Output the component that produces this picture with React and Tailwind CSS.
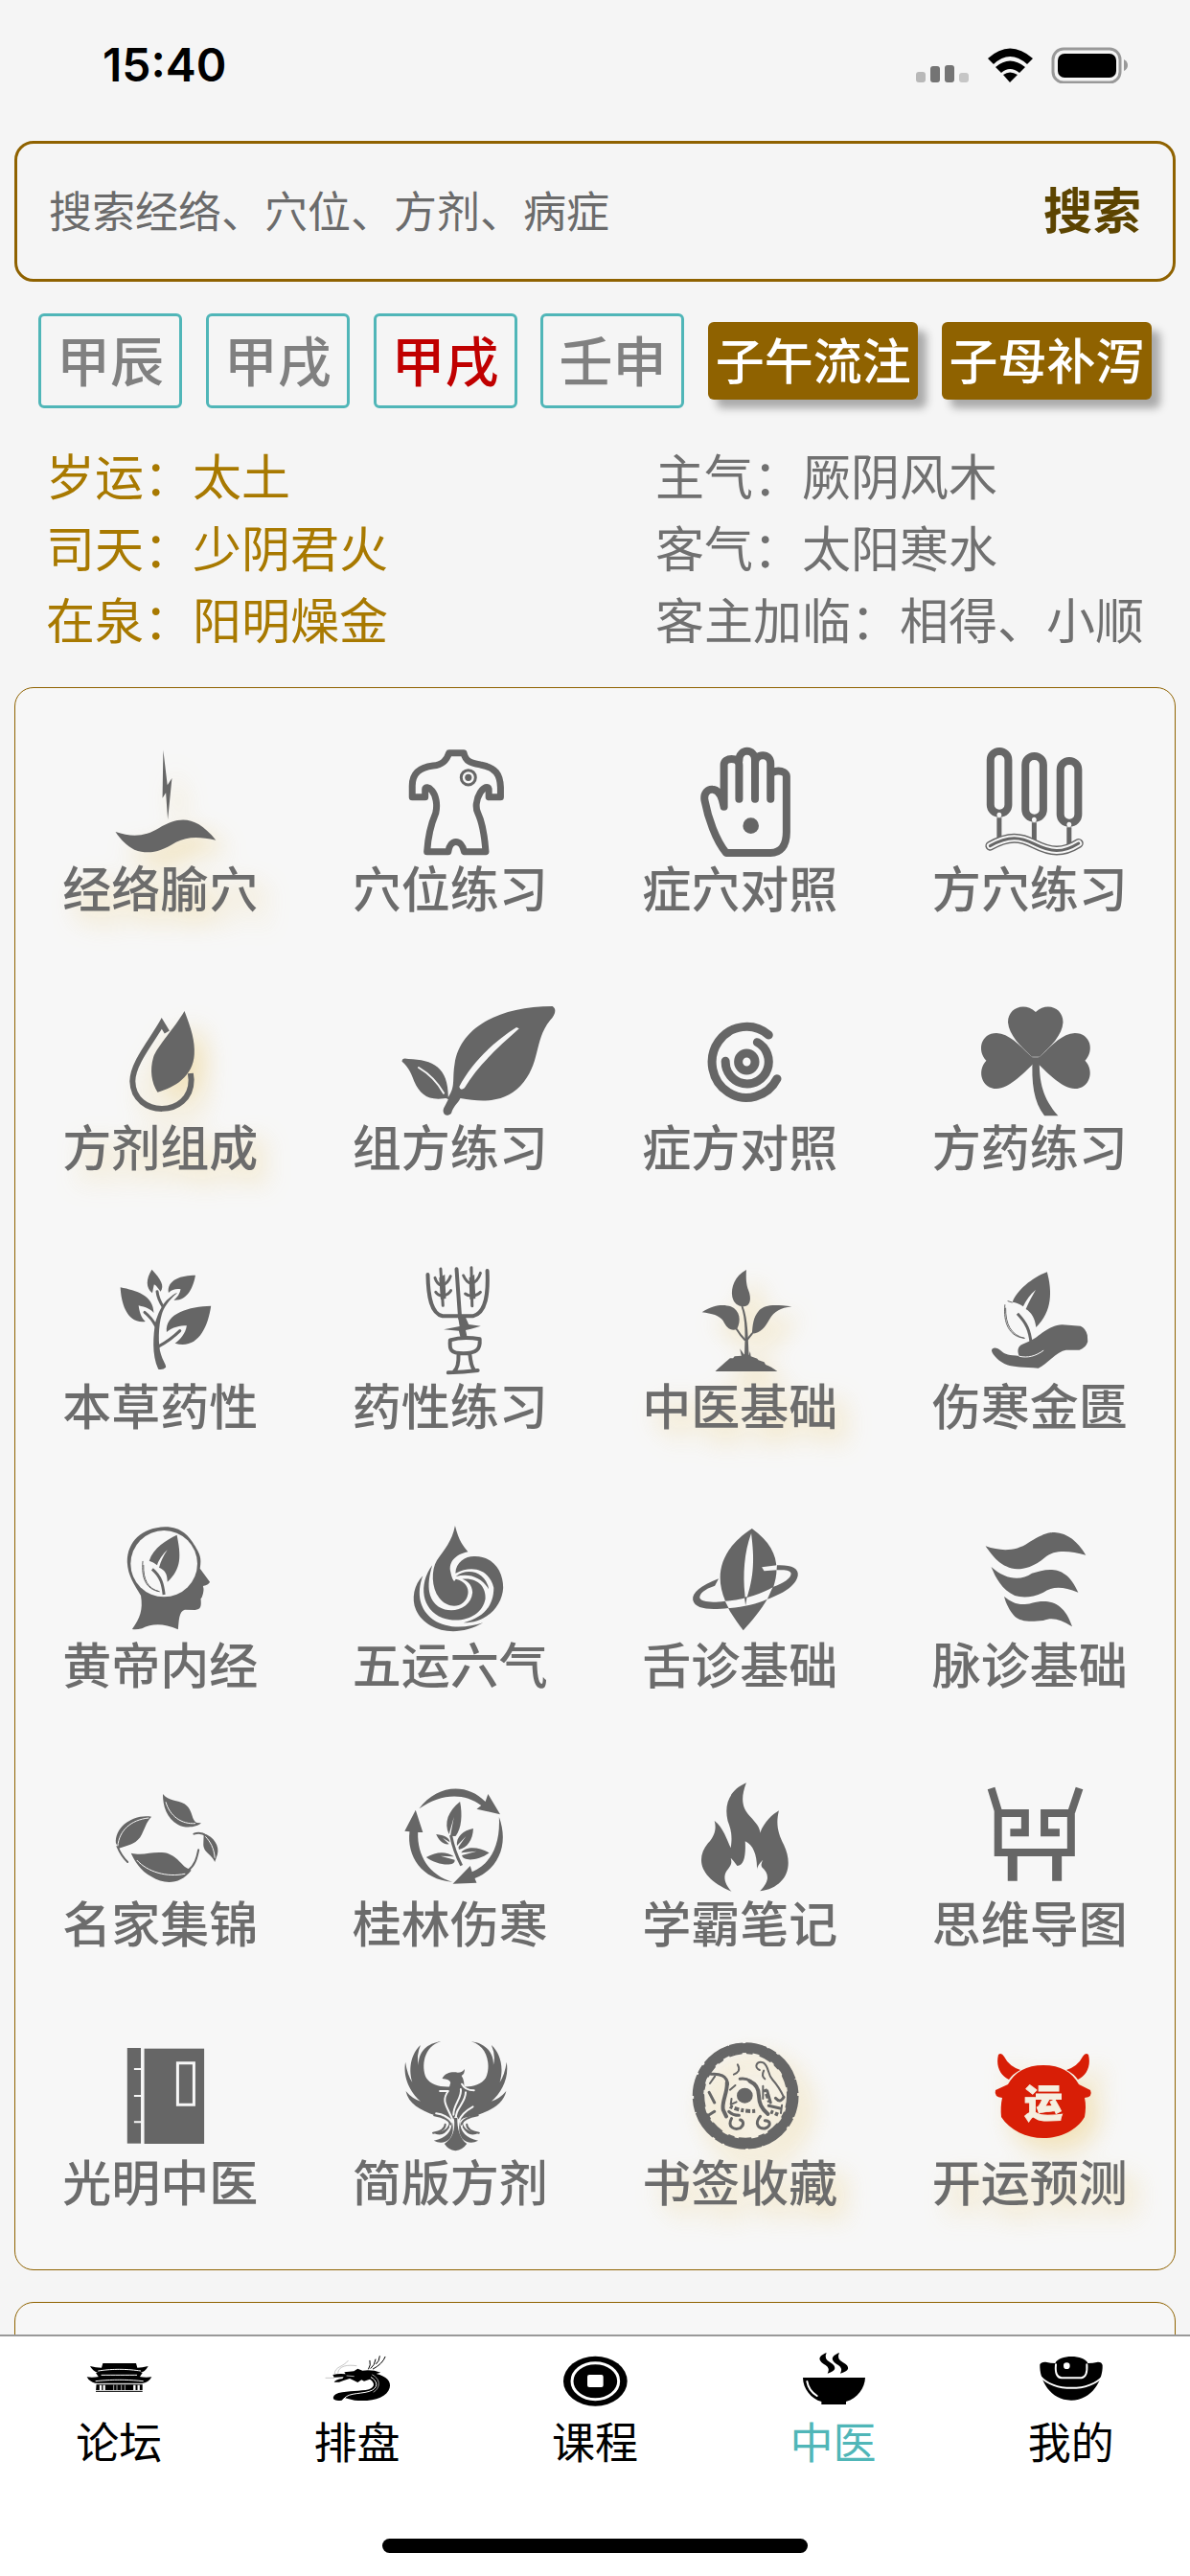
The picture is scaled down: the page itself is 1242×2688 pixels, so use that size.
import React, { useState } from 'react';
import clsx from 'clsx';

const INK = '#666666';
const PAPER = '#f7f7f7';

const line = (width, color = INK) => ({
  fill: 'none',
  stroke: color,
  strokeWidth: width,
  strokeLinecap: 'round',
  strokeLinejoin: 'round',
});

// Each drawing keeps its own viewBox; strokes stay in screen pixels.
function Drawing({ box, children }) {
  return (
    <svg
      viewBox={box}
      preserveAspectRatio="none"
      fill={INK}
      aria-hidden="true"
      className="h-[120px] w-[180px] overflow-visible [&_*]:[vector-effect:non-scaling-stroke]"
    >
      {children}
    </svg>
  );
}

const NeedleIcon = () => (
  <Drawing box="195 105 455 360">
    <path d="M431 128 L442 238 L454 216 L443 346 L438 262 L429 278Z" />
    <path d="M305 384 C350 402 385 398 420 372 C472 336 515 330 570 410 C525 398 495 398 465 416 C420 450 390 455 355 440 C335 428 320 410 305 384Z" />
  </Drawing>
);

const BodyIcon = () => (
  <Drawing box="958 105 455 360">
    <path
      {...line(7)}
      d="M1182 137 H1221 C1226 165 1240 168 1265 174 C1305 182 1317 205 1318 245 V275 H1287 V250 C1285 240 1275 243 1265 260 C1252 285 1252 310 1258 325 C1268 350 1275 385 1279 446 H1222 C1215 405 1185 405 1180 446 H1124 C1127 390 1138 350 1147 325 C1152 300 1148 270 1137 255 C1128 243 1119 243 1119 250 V275 H1085 V240 C1085 200 1105 182 1140 177 C1165 174 1176 160 1182 137Z"
    />
    <ellipse {...line(3)} cx="1233" cy="214" rx="19" ry="23" />
    <ellipse cx="1233" cy="214" rx="9" ry="11" />
  </Drawing>
);

const HandIcon = () => (
  <Drawing box="156 105 455 360">
    <path
      {...line(8)}
      d="M342 305 C338 280 330 252 312 251 C300 250 288 262 291 285 C300 340 320 410 348 450 H465 C490 450 507 430 507 385 V210 C506 188 465 188 465 210 M342 305 V175 C342 150 382 150 382 175 V281 M382 160 C382 122 424 122 424 160 V281 M424 170 C424 136 465 136 465 170 V281"
    />
    <ellipse cx="413" cy="365" rx="21" ry="25" />
  </Drawing>
);

const NeedlesIcon = () => (
  <Drawing box="918 105 454 360">
    <rect {...line(8)} x="1041" y="132" width="47" height="194" rx="23" ry="27" />
    <rect {...line(8)} x="1133" y="147" width="47" height="194" rx="23" ry="27" />
    <rect {...line(8)} x="1225" y="162" width="47" height="194" rx="23" ry="27" />
    <g fill={PAPER}>
      <ellipse cx="1064" cy="331" rx="6" ry="8" />
      <ellipse cx="1156" cy="346" rx="6" ry="8" />
      <ellipse cx="1248" cy="361" rx="6" ry="8" />
    </g>
    <path {...line(5)} strokeLinecap="butt" d="M1064 340 V402 M1156 355 V420 M1248 370 V435" />
    <path {...line(10)} d="M1040 428 C1090 395 1120 400 1156 422 C1200 448 1230 452 1273 420" />
    <path {...line(7, PAPER)} d="M1040 428 C1090 395 1120 400 1156 422 C1200 448 1230 452 1273 420" />
    <path {...line(3)} d="M1040 428 C1090 395 1120 400 1156 422 C1200 448 1230 452 1273 420" />
  </Drawing>
);

const DropLeafIcon = () => (
  <Drawing box="195 915 455 360">
    <path {...line(6)} strokeLinecap="butt" strokeLinejoin="miter" d="M441 1011 L427 984 C400 1040 350 1110 350 1165 C352 1280 505 1280 505 1160 L503 1140" />
    <path d="M487 945 C505 1000 515 1040 513 1080 C510 1150 460 1185 416 1199 C400 1170 395 1130 405 1090 C415 1055 460 1000 487 945Z" />
  </Drawing>
);

const LeavesIcon = () => (
  <Drawing box="958 915 455 360">
    <path d="M1455 930 C1466 938 1464 955 1448 975 C1405 1040 1425 1110 1370 1180 C1330 1230 1275 1232 1212 1218 C1205 1235 1195 1240 1188 1265 C1175 1280 1160 1265 1170 1245 L1180 1222 Q1175 1216 1168 1219 C1125 1225 1105 1205 1090 1165 C1080 1130 1070 1115 1058 1103 C1058 1092 1065 1092 1075 1095 C1140 1098 1180 1120 1180 1215 C1200 1180 1190 1160 1197 1110 C1210 1000 1310 930 1455 930Z" />
    <path fill={PAPER} d="M1367 1000 C1310 1060 1255 1120 1223 1186 Q1212 1196 1209 1182 C1240 1110 1300 1040 1360 996Z" />
    <path {...line(2, PAPER)} d="M1102 1122 C1135 1145 1155 1175 1168 1202" />
  </Drawing>
);

const TargetIcon = () => (
  <Drawing box="156 915 455 360">
    <path {...line(9)} d="M460 1020 A91 111 0 1 0 482 1157" />
    <path {...line(9)} d="M430 1043 A57 69 0 1 1 346 1102" />
    <ellipse {...line(9)} cx="402" cy="1104" rx="22" ry="27" />
  </Drawing>
);

const CloverIcon = () => (
  <Drawing box="918 915 454 360">
    <path d="M1160 948 C1130 915 1087 935 1087 980 C1090 1020 1120 1055 1150 1088 H1170 C1200 1055 1230 1020 1232 980 C1232 935 1190 915 1160 948Z" />
    <path d="M1030 1100 C1005 1070 1015 1014 1057 1014 C1090 1016 1115 1050 1145 1083 L1162 1100 C1120 1150 1090 1185 1057 1188 C1020 1188 1003 1135 1030 1100Z" />
    <path d="M1290 1100 C1315 1070 1305 1014 1263 1014 C1230 1016 1205 1050 1175 1083 L1158 1100 C1200 1150 1230 1185 1263 1188 C1300 1188 1317 1135 1290 1100Z" />
    <path d="M1152 1090 C1148 1170 1155 1230 1183 1273 H1219 C1180 1220 1168 1170 1170 1090Z" />
  </Drawing>
);

const HerbIcon = () => (
  <Drawing box="195 105 455 360">
    <path d="M418 446 C400 400 405 340 410 300 C418 270 425 250 440 230 C455 215 465 205 468 208 C445 230 432 255 427 275 C418 310 417 370 425 400 C430 420 438 430 438 440 Q430 450 418 446Z" />
    <path {...line(3)} d="M420 374 Q450 355 475 326 M411 310 Q400 285 382 268 M430 250 Q417 225 415 203" />
    <path d="M318 190 C360 200 405 215 406 270 C398 258 385 252 366 247 C368 265 372 285 384 297 C335 305 320 240 318 190Z" />
    <path d="M401 134 C425 165 435 185 424 203 C418 195 414 185 407 181 C405 190 404 200 402 208 C385 190 385 165 401 134Z" />
    <path d="M516 152 C480 152 440 165 445 207 C455 196 465 194 477 196 C475 210 468 222 459 230 C495 232 510 190 516 152Z" />
    <path d="M557 248 C500 250 435 270 440 330 C455 315 475 310 493 310 C490 335 475 355 462 365 C520 385 548 320 557 248Z" />
  </Drawing>
);

const OracleIcon = () => (
  <Drawing box="958 105 455 360">
    <path {...line(4)} d="M1126 150 C1127 220 1135 273 1165 280 H1245 C1280 270 1286 210 1283 138 M1202 133 L1211 285 M1218 290 L1220 345" />
    <path {...line(3)} d="M1160 132 L1166 247 M1145 160 Q1150 180 1163 184 Q1180 178 1186 155 M1147 205 Q1152 215 1166 217 Q1182 212 1187 200 M1241 128 L1243 248 M1220 153 Q1228 175 1241 178 Q1258 172 1265 145 M1225 210 Q1232 217 1243 217 Q1258 215 1265 205" />
    <path d="M1156 160 L1171 150 L1174 225 L1160 228Z M1235 160 L1249 150 L1252 225 L1237 228Z" />
    <path d="M1206 284 L1226 284 L1234 306 L1266 311 L1240 320 L1226 324 L1230 346 H1212 L1208 326 L1168 322 L1210 312Z" />
    <path {...line(4)} d="M1185 355 Q1220 342 1263 352 C1265 385 1255 396 1220 397 C1185 397 1183 385 1185 355Z M1207 400 Q1208 440 1196 452 M1237 400 Q1240 435 1248 448 M1180 457 Q1220 455 1258 450" />
  </Drawing>
);

const SproutIcon = () => (
  <Drawing box="156 105 455 360">
    <path d="M401 135 C370 155 360 190 364 220 C368 240 378 250 395 250 C412 248 415 225 407 200 C400 180 400 160 401 135Z" />
    <path d="M284 268 C320 240 345 245 360 250 C385 262 388 295 376 322 C358 328 348 315 340 295 C330 278 310 272 284 268Z" />
    <path d="M521 250 C470 243 450 245 435 262 C418 285 418 310 416 335 C440 332 450 315 462 290 C475 265 490 255 521 250Z" />
    <path d="M387 248 C400 290 398 340 396 405 H408 C405 350 406 290 392 248Z" />
    <path {...line(2)} d="M376 322 Q385 340 397 354 M416 335 L404 353" />
    <path d="M319 453 C340 430 350 420 358 412 L366 412 L370 406 L388 404 L384 382 L395 400 L408 402 L411 390 L413 406 L430 413 L433 418 L448 424 L452 432 C462 436 472 444 483 453Z" />
  </Drawing>
);

const HandLeafIcon = () => (
  <Drawing box="918 105 454 360">
    <path d="M1190 142 C1203 200 1205 265 1161 315 C1158 285 1148 268 1134 258 C1142 235 1152 215 1160 198 C1145 212 1135 230 1127 250 C1118 242 1108 237 1099 236 C1110 200 1150 160 1190 142Z" />
    <path {...line(1)} d="M1079 245 C1074 300 1090 345 1130 349 M1081 255 C1080 305 1095 340 1130 349 M1087 233 L1098 237" />
    <path {...line(3)} strokeLinecap="butt" d="M1112 272 C1137 303 1144 325 1148 365" />
    <path d="M1145 358 C1170 345 1190 310 1230 307 L1278 311 Q1292 318 1296 340 L1297 360 Q1292 380 1275 386 H1240 C1215 390 1190 430 1167 443 C1130 440 1100 440 1085 433 C1065 425 1045 400 1044 388 C1045 375 1060 378 1068 388 C1080 402 1090 402 1117 405 C1112 395 1110 375 1125 368Z" />
    <path {...line(1, PAPER)} d="M1117 406 C1140 412 1160 405 1180 388" />
  </Drawing>
);

const HeadIcon = () => (
  <Drawing box="195 915 455 360">
    <path d="M436 940 C480 940 500 970 515 1000 C527 1025 533 1035 528 1070 L554 1112 Q552 1120 536 1125 Q540 1140 533 1160 L530 1165 C532 1190 530 1198 515 1200 L488 1199 C472 1205 473 1230 470 1261 C430 1240 400 1243 375 1258 Q360 1262 349 1260 C370 1225 378 1200 372 1155 C355 1120 338 1095 336 1050 C336 985 375 942 436 940Z" />
    <ellipse cx="433" cy="1055" rx="88" ry="104" fill={PAPER} />
    <path d="M467 965 C478 1030 480 1070 442 1112 C442 1085 435 1075 420 1067 C425 1045 432 1030 442 1012 C430 1025 418 1045 415 1060 Q405 1050 394 1046 C405 1005 440 980 467 965Z" />
    <path {...line(1)} d="M377 1048 C373 1100 385 1135 420 1142 M379 1060 C378 1105 390 1133 420 1142" />
    <path {...line(3)} strokeLinecap="butt" d="M402 1072 C425 1095 430 1120 433 1152" />
  </Drawing>
);

const SwirlIcon = () => (
  <Drawing box="958 915 455 360">
    <path d="M1198 936 C1208 985 1220 1000 1232 1018 C1200 1025 1180 1050 1186 1080 Q1190 1105 1196 1110 L1200 1103 C1225 1110 1235 1130 1232 1150 C1225 1195 1180 1200 1156 1162 C1135 1130 1135 1075 1150 1045 C1170 1010 1190 985 1198 936Z" />
    <path d="M1199 1085 C1200 1050 1225 1032 1248 1032 C1300 1030 1325 1080 1325 1130 C1322 1190 1280 1240 1220 1240 C1270 1225 1300 1190 1300 1130 C1290 1080 1250 1055 1199 1085Z" />
    <path d="M1217 1103 C1260 1098 1280 1130 1278 1165 C1270 1220 1215 1245 1165 1225 C1110 1200 1100 1120 1138 1060 C1120 1130 1130 1170 1155 1190 C1190 1215 1240 1195 1244 1145 C1243 1120 1230 1108 1217 1103Z" />
    <path d="M1113 1093 C1095 1150 1105 1200 1140 1230 C1180 1262 1230 1255 1272 1240 C1200 1290 1120 1265 1095 1200 C1082 1165 1090 1120 1113 1093Z" />
    <path d="M1200 1095 C1230 1065 1280 1080 1287 1135 C1265 1095 1235 1085 1200 1095Z" />
  </Drawing>
);

const OrbitIcon = () => (
  <Drawing box="156 915 455 360">
    <path d="M416 945 C480 1000 492 1060 472 1130 L457 1165 C440 1200 415 1235 393 1264 C375 1235 350 1195 345 1170 C320 1100 325 1015 416 945Z" />
    <path fill={PAPER} d="M414 960 C420 1020 425 1080 403 1160 L399 1185 L397 1150 C392 1090 395 1020 414 960Z" />
    <path fill={PAPER} d="M344 1172 C390 1170 440 1150 472 1128 L456 1166 C430 1180 390 1192 354 1194Z" />
    <path fill={PAPER} d="M442 1066 L482 1060 V1075 L448 1078Z" />
    <path d="M328 1102 C280 1125 258 1145 260 1168 C265 1200 310 1200 354 1194 L345 1172 C310 1178 282 1175 278 1162 C278 1148 290 1135 318 1124Z" />
    <path d="M482 1060 C520 1058 540 1070 537 1092 C532 1125 495 1150 457 1166 L471 1128 C500 1115 520 1100 519 1085 C515 1074 500 1075 481 1075Z" />
    <path d="M396 1160 L403 1158 L399 1186Z" />
  </Drawing>
);

const WavesIcon = () => (
  <Drawing box="918 915 454 360">
    <path d="M1028 1000 C1070 1018 1110 1015 1140 990 C1180 960 1195 957 1210 957 C1245 960 1270 985 1292 1028 C1250 1015 1210 1010 1185 1035 C1155 1065 1130 1072 1112 1072 C1070 1070 1045 1030 1028 1000Z" />
    <path d="M1043 1065 C1080 1105 1120 1110 1150 1085 C1190 1070 1240 1055 1272 1145 C1230 1125 1205 1125 1180 1145 C1150 1162 1125 1162 1105 1155 C1070 1135 1055 1100 1043 1065Z" />
    <path d="M1077 1158 C1100 1180 1120 1188 1150 1178 C1195 1165 1235 1175 1256 1252 C1225 1230 1205 1222 1180 1233 C1140 1238 1120 1235 1105 1220 C1090 1200 1082 1180 1077 1158Z" />
  </Drawing>
);

const LeafRingIcon = () => (
  <Drawing box="195 105 455 360">
    <path d="M430 156 C445 178 470 175 487 187 C510 205 505 240 520 246 L531 247 C520 260 490 265 470 252 C440 232 430 195 430 156Z" />
    <path d="M400 227 C350 218 303 260 306 310 L314 326 C335 318 355 315 370 292 C383 265 385 245 400 227Z" />
    <path d="M346 341 C380 350 400 335 435 340 C470 348 480 385 498 390 L505 395 C475 440 435 440 400 415 C370 395 355 365 346 341Z" />
    <path d="M538 280 C565 290 580 320 574 345 L567 369 C560 345 535 340 537 310Z" />
    <path {...line(2)} d="M310 320 Q320 350 337 369 M496 396 C515 380 520 355 524 331 M512 281 Q530 273 545 287" />
    <path {...line(1, PAPER)} d="M438 182 C448 225 480 252 515 248 M392 231 C345 237 315 270 311 318 M362 364 C390 400 440 418 488 406 M543 290 C555 305 565 325 567 355" />
  </Drawing>
);

const CycleIcon = () => (
  <Drawing box="958 105 455 360">
    <path d="M1103 202 C1150 125 1230 120 1278 180 L1285 156 L1317 220 L1255 203 L1267 192 C1220 150 1160 155 1103 202Z" />
    <path d="M1314 228 C1340 310 1315 390 1250 420 L1255 434 L1192 437 L1238 381 L1243 400 C1290 375 1318 320 1314 228Z" />
    <path d="M1191 431 C1110 425 1070 350 1078 274 L1065 272 L1094 206 L1113 276 L1100 276 C1098 350 1130 410 1191 431Z" />
    <path d="M1211 180 C1218 220 1215 265 1200 287 Q1190 290 1186 284 L1195 228 L1182 282 C1168 245 1180 210 1211 180Z" />
    <path d="M1246 264 C1245 300 1230 325 1208 330 L1207 322 L1227 288 L1203 318 C1200 290 1220 270 1246 264Z" />
    <path d="M1148 282 C1170 285 1184 293 1184 307 L1165 293 L1182 313 C1165 315 1155 300 1148 282Z" />
    <path d="M1122 354 C1150 335 1175 335 1195 352 L1160 350 L1197 362 C1200 385 1150 380 1122 354Z" />
    <path d="M1288 340 C1260 320 1225 320 1214 340 L1255 335 L1216 348 C1220 368 1260 365 1288 340Z" />
    <path {...line(3)} strokeLinecap="butt" d="M1187 285 Q1195 335 1215 380" />
  </Drawing>
);

const FlameIcon = () => (
  <Drawing box="156 105 455 360">
    <path d="M401 121 C385 170 390 200 410 225 C430 250 438 265 437 278 C450 240 470 220 487 208 C478 250 485 280 500 315 C530 390 500 450 437 460 C465 425 460 405 442 385 Q438 375 445 362 Q430 378 429 393 C430 350 420 315 398 304 C400 350 395 380 377 381 Q368 365 360 356 C364 375 360 380 350 395 C338 415 345 440 362 461 C280 420 265 360 300 310 C320 285 322 260 317 240 C340 260 350 300 360 325 C365 285 360 265 352 240 C342 190 355 145 401 121Z" />
  </Drawing>
);

const BullIcon = () => (
  <Drawing box="918 105 454 360">
    <path {...line(8)} strokeLinecap="butt" strokeLinejoin="miter" d="M1043 138 L1062 212 M1275 138 L1254 212 M1093 277 H1132 V216 H1061 V339 H1253 V216 H1183 V277 H1223" />
    <path {...line(10)} strokeLinecap="butt" d="M1099 345 V428 M1216 345 V428" />
  </Drawing>
);

const BookIcon = () => (
  <Drawing box="195 915 455 360">
    <rect x="336" y="951" width="36" height="299" />
    <rect x="381" y="953" width="158" height="298" />
    <path {...line(2, PAPER)} strokeLinecap="butt" d="M354 1017 H373 M354 1101 H373 M354 1183 H373" />
    <rect {...line(3, PAPER)} strokeLinejoin="miter" x="469" y="998" width="43" height="131" />
  </Drawing>
);

function PhoenixWing() {
  return (
    <>
      <path d="M1161 931 C1115 945 1108 1010 1122 1045 C1135 1068 1160 1075 1190 1072 L1199 1090 L1199 1165 L1190 1180 C1180 1165 1165 1168 1145 1162 C1105 1145 1075 1125 1068 1086 Q1085 1110 1107 1118 C1080 1090 1060 1045 1067 995 Q1072 1035 1085 1058 C1073 1010 1085 965 1107 942 Q1095 975 1102 1005 C1100 965 1125 935 1161 931Z" />
      <path {...line(2)} d="M1172 1190 Q1172 1210 1140 1217 M1143 1162 Q1182 1170 1186 1190" />
      <path d="M1183 1185 Q1178 1215 1140 1216 Q1165 1235 1183 1200Z" />
      <path d="M1190 1180 Q1190 1230 1142 1241 Q1165 1256 1184 1235 Q1197 1215 1190 1180Z" />
    </>
  );
}

const PhoenixIcon = () => (
  <Drawing box="958 915 455 360">
    <PhoenixWing />
    <g transform="translate(2401 0) scale(-1 1)">
      <PhoenixWing />
    </g>
    <path d="M1164 1047 C1172 1028 1190 1025 1205 1028 Q1218 1028 1223 1017 Q1224 1032 1215 1038 C1228 1060 1222 1100 1205 1130 L1200 1165 L1170 1130 L1186 1060 Q1184 1048 1164 1047Z" />
    <path {...line(2, PAPER)} d="M1158 1086 L1180 1086 C1158 1120 1182 1140 1193 1182 M1226 1090 C1226 1125 1196 1140 1200 1180 M1213 1080 C1218 1105 1192 1130 1194 1160 M1216 1064 Q1224 1084 1248 1084 M1148 1156 Q1175 1160 1190 1182 M1245 1135 Q1215 1155 1208 1180" />
    <path d="M1195 1170 C1200 1210 1190 1235 1170 1251 Q1180 1270 1199 1273 Q1218 1270 1229 1251 C1210 1235 1203 1200 1204 1170Z" />
  </Drawing>
);

const SealIcon = () => (
  <Drawing box="156 915 455 360">
    <ellipse {...line(10)} cx="399" cy="1101" rx="124" ry="150" />
    <ellipse {...line(4)} strokeLinecap="butt" strokeDasharray="22 2 9 3 30 1 14 3" cx="399" cy="1101" rx="135" ry="161" />
    <ellipse {...line(2)} strokeDasharray="12 6 5 9" cx="399" cy="1101" rx="111" ry="134" />
    <ellipse cx="397" cy="1100" rx="21" ry="24" />
    <path {...line(4)} d="M410 1055 C428 1065 434 1080 434 1100 C435 1125 440 1140 458 1158 M350 1060 C352 1090 335 1120 340 1145 L348 1165" />
    <path {...line(3)} d="M308 1033 C330 1030 350 1038 352 1065 M384 1048 Q400 1045 412 1055 M456 1085 L465 1122 M500 1105 Q490 1125 478 1108 M460 1132 L490 1140 M303 1090 L317 1122 M303 1160 L317 1150 M355 1150 Q365 1162 382 1162 M362 1172 C350 1200 370 1208 385 1202 C398 1190 392 1178 385 1176 M438 1165 C420 1190 435 1205 450 1203 C468 1195 465 1178 450 1178" />
    <path {...line(2)} d="M378 1003 C386 1020 380 1028 368 1034 M436 1020 C420 1012 428 990 446 997 C462 1010 455 1030 470 1050 C485 1070 492 1085 500 1105 M447 1022 Q440 1038 450 1048 M318 1040 L305 1062 M358 1082 L372 1068 M445 1070 V1110 M362 1110 L360 1128 L375 1120 M495 1130 L492 1155" />
    <path {...line(4)} strokeLinecap="butt" strokeDasharray="3 2 5 2" d="M358 1134 Q390 1152 428 1148 M450 1080 L462 1120 M465 1150 L485 1160" />
  </Drawing>
);

const FortuneIcon = () => (
  <svg viewBox="0 0 180 120" fill="#d81e06" aria-hidden="true" className="h-[120px] w-[180px] overflow-visible">
    <path d="M57 19 Q60 16 63 21 Q68 31 80 35 Q72 39 68 45 C59 41 54 31 57 19Z" />
    <path d="M151 19 Q148 16 145 21 Q140 31 128 35 Q136 39 140 45 C149 41 154 31 151 19Z" />
    <path d="M104 30 C122 30 134 37 141 50 L153 56 Q156 63 147 64 Q149 73 147 84 C139 98 122 106 104 106 C86 106 69 98 60 84 Q59 73 61 64 Q52 63 54 56 L67 50 C74 37 86 30 104 30Z" />
    <text x="104" y="84" textAnchor="middle" fill="#f5efe0" fontSize="40" fontWeight="900" stroke="#f5efe0" strokeWidth="1">
      运
    </text>
  </svg>
);

const modules = [
  { name: '经络腧穴', Icon: NeedleIcon, glow: true },
  { name: '穴位练习', Icon: BodyIcon },
  { name: '症穴对照', Icon: HandIcon },
  { name: '方穴练习', Icon: NeedlesIcon },
  { name: '方剂组成', Icon: DropLeafIcon, glow: true },
  { name: '组方练习', Icon: LeavesIcon },
  { name: '症方对照', Icon: TargetIcon },
  { name: '方药练习', Icon: CloverIcon },
  { name: '本草药性', Icon: HerbIcon },
  { name: '药性练习', Icon: OracleIcon },
  { name: '中医基础', Icon: SproutIcon, glow: true },
  { name: '伤寒金匮', Icon: HandLeafIcon },
  { name: '黄帝内经', Icon: HeadIcon },
  { name: '五运六气', Icon: SwirlIcon },
  { name: '舌诊基础', Icon: OrbitIcon },
  { name: '脉诊基础', Icon: WavesIcon },
  { name: '名家集锦', Icon: LeafRingIcon },
  { name: '桂林伤寒', Icon: CycleIcon },
  { name: '学霸笔记', Icon: FlameIcon },
  { name: '思维导图', Icon: BullIcon },
  { name: '光明中医', Icon: BookIcon },
  { name: '简版方剂', Icon: PhoenixIcon },
  { name: '书签收藏', Icon: SealIcon, glow: true },
  { name: '开运预测', Icon: FortuneIcon, glow: true },
];

const TempleIcon = () => (
  <svg viewBox="12 0 240 240" aria-hidden="true" className="h-20 w-20">
    <path d="M82 78 H186 L190 92 Q205 92 224 87 Q215 104 200 108 H66 Q50 102 42 87 Q60 92 78 92Z" />
    <path d="M60 108 H206 L198 120 H68Z" />
    <path d="M32 121 Q50 124 70 120 H196 Q216 124 235 121 Q225 138 208 140 H58 Q40 136 32 121Z" />
    <path {...line(3, '#fff')} d="M68 102 Q132 92 200 102 M78 115 H188 M60 134 Q132 126 208 134" strokeDasharray="13 2" />
    <path d="M62 140 H206 V168 H60Z" />
    <path {...line(3, '#fff')} strokeLinecap="butt" d="M60 143 H207 M60 164 H207" />
    <path {...line(7, '#fff')} strokeLinecap="butt" d="M75 146 V162 M86 146 V162 M181 146 V162 M194 146 V162" />
    <path {...line(2, '#fff')} strokeLinecap="butt" d="M116 146 V162 M126 146 V162 M140 146 V162 M151 146 V162" />
  </svg>
);

const DragonIcon = () => (
  <svg viewBox="759 0 240 240" aria-hidden="true" className="h-20 w-20">
    <path d="M804 190 Q800 178 820 171 C850 164 890 166 915 160 C935 152 934 138 918 128 L900 134 L892 130 L880 138 L868 132 L855 126 L836 132 L822 137 L806 137 Q810 129 832 126 L836 121 L806 122 L802 114 Q820 110 842 112 L838 106 L868 103 L880 95 L895 101 Q925 97 952 107 L938 111 C970 118 986 136 980 155 C972 185 925 200 870 194 L838 186 L830 194 Q812 198 804 190Z" />
    <path {...line(3, '#fff')} d="M838 188 C850 168 900 176 926 162 C946 150 940 132 922 122" />
    <path {...line(2, '#fff')} d="M926 114 C956 130 948 158 930 168 M846 117 L868 119" />
    <path {...line(3, '#000')} d="M914 96 Q922 84 918 70 M921 94 Q934 84 936 66 M928 96 Q958 80 966 58 M938 80 Q948 72 949 56" />
    <path {...line(1, '#555')} d="M808 110 C808 88 835 90 850 70 M818 108 C820 85 850 82 876 86 M780 124 H806" />
  </svg>
);

const CoinIcon = () => (
  <svg viewBox="3 0 240 240" aria-hidden="true" className="h-20 w-20">
    <ellipse cx="124" cy="134" rx="100" ry="78" />
    <ellipse cx="124" cy="134" rx="73" ry="57" fill="none" stroke="#fff" strokeWidth="9" />
    <rect x="99" y="114" width="50" height="39" rx="6" fill="#fff" />
  </svg>
);

const BowlIcon = () => (
  <svg viewBox="747 0 240 240" aria-hidden="true" className="h-20 w-20">
    <path d="M774 123 H969 C968 155 945 188 909 198 V207 H832 V198 C800 190 774 158 774 123Z" />
    <path {...line(6, '#fff')} d="M787 135 Q792 164 818 180" />
    <path d="M848 45 C815 58 825 72 845 84 Q860 94 851 110 C880 102 880 88 860 76 Q838 64 848 45Z" />
    <path d="M888 45 C855 58 865 72 885 84 Q900 94 891 110 C922 102 922 88 900 76 Q878 64 888 45Z" />
  </svg>
);

const IngotIcon = () => (
  <svg viewBox="24 0 240 240" aria-hidden="true" className="h-20 w-20">
    <path d="M46 82 Q50 73 64 74 Q80 78 94 78 C105 50 185 50 196 78 Q212 78 228 74 Q240 74 242 84 C244 130 210 194 144 194 C78 194 44 130 46 82Z" />
    <path {...line(6, '#fff')} d="M96 82 Q92 122 114 124 H176 Q196 120 193 82 M46 118 C90 168 200 168 244 118" />
    <circle cx="130" cy="86" r="10" fill="#fff" />
  </svg>
);

const tabs = [
  { name: '论坛', Icon: TempleIcon },
  { name: '排盘', Icon: DragonIcon },
  { name: '课程', Icon: CoinIcon },
  { name: '中医', Icon: BowlIcon },
  { name: '我的', Icon: IngotIcon },
];

const pillars = [
  { text: '甲辰' },
  { text: '甲戌' },
  { text: '甲戌', active: true },
  { text: '壬申' },
];

const leftInfo = ['岁运：太土', '司天：少阴君火', '在泉：阳明燥金'];
const rightInfo = ['主气：厥阴风木', '客气：太阳寒水', '客主加临：相得、小顺'];

function StatusBar() {
  return (
    <header className="flex h-[136px] shrink-0 items-center justify-between pr-16 pl-[107px]">
      <time className="font-['Inter'] text-[48px] leading-none font-semibold text-black">15:40</time>
      <svg viewBox="957 48 222 38" className="h-[38px] w-[222px]" aria-label="信号、无线网络、电量">
        <rect x="957" y="74" width="10" height="11" rx="3" fill="#b8b8b8" />
        <rect x="972" y="68" width="10" height="17" rx="3" fill="#747474" />
        <rect x="987" y="67" width="10" height="18" rx="3" fill="#747474" />
        <rect x="1002" y="75" width="10" height="10" rx="3" fill="#c6c6c6" />
        <path d="M1032 60 Q1055 39 1079 60 L1073 66 Q1055 50 1038 66Z" />
        <path d="M1040 69 Q1055 56 1071 69 L1065 75 Q1055 67 1046 75Z" />
        <path d="M1048 77 Q1055 72 1063 77 L1055 85Z" />
        <rect x="1100" y="50" width="70" height="35" rx="11" fill="none" stroke="#999" strokeWidth="3" />
        <rect x="1105" y="55" width="61" height="25" rx="7" />
        <path d="M1174 61 Q1178 63 1178 67 Q1178 71 1174 73Z" fill="#999" />
      </svg>
    </header>
  );
}

function SearchBar() {
  const [keyword, setKeyword] = useState('');
  return (
    <form
      onSubmit={(e) => e.preventDefault()}
      className="mx-[15px] mt-[11px] flex h-[147px] items-center rounded-[20px] border-3 border-[#8f6200] px-[33px] pt-1"
    >
      <input
        type="search"
        aria-label="搜索"
        value={keyword}
        onChange={(e) => setKeyword(e.target.value)}
        placeholder="搜索经络、穴位、方剂、病症"
        className="min-w-0 flex-1 bg-transparent text-[45px] text-[#666] outline-none placeholder:text-[#6b6b6b]"
      />
      <button type="submit" className="text-[51px] font-bold text-[#5c4400]">搜索</button>
    </form>
  );
}

export default function App() {
  const [tab, setTab] = useState('中医');

  return (
    <div className="flex h-screen flex-col bg-[#f5f5f5] font-['Liberation_Sans','Noto_Sans_CJK_SC',sans-serif]">
      <StatusBar />

      <main className="min-h-0 flex-1 overflow-hidden">
        <SearchBar />

        <div className="mt-[33px] flex items-center justify-between px-10">
          {pillars.map((p, i) => (
            <span
              key={i}
              className={clsx(
                'grid h-[99px] w-[150px] place-items-center rounded-md border-3 border-[#50b6b8] pt-1 text-[56px] leading-none font-medium',
                p.active ? 'text-[#c00000]' : 'text-[#808080]'
              )}
            >
              {p.text}
            </span>
          ))}
          {['子午流注', '子母补泻'].map((text) => (
            <button
              key={text}
              type="button"
              className="grid h-[81px] w-[219px] place-items-center rounded-md bg-[#8f6200] pt-1 text-[51px] leading-none font-medium text-white shadow-[9px_9px_9px_#aaaaaa]"
            >
              {text}
            </button>
          ))}
        </div>

        <div className="mt-9 flex justify-between px-12 text-[51px] leading-[75px]">
          <div className="text-[#a87900]">
            {leftInfo.map((t) => <p key={t}>{t}</p>)}
          </div>
          <div className="text-[#707070]">
            {rightInfo.map((t) => <p key={t}>{t}</p>)}
          </div>
        </div>

        <section className="mx-[15px] mt-[30px] grid grid-cols-4 gap-y-[85px] rounded-[20px] border border-[#8f6200] bg-[#f7f7f7] pt-[57px] pb-[58px]">
          {modules.map(({ name, Icon, glow }) => (
            <button
              key={name}
              type="button"
              className={clsx(
                'flex flex-col items-center gap-[5px] text-[51px] leading-[60px] font-medium text-[#6c6c6c]',
                glow && 'drop-shadow-[12px_14px_13px_#e8bc4a59]'
              )}
            >
              <Icon />
              {name}
            </button>
          ))}
        </section>

        <section className="mx-[15px] mt-[33px] h-[400px] rounded-[20px] border border-[#8f6200] bg-[#f7f7f7]" />
      </main>

      <nav className="shrink-0 border-t-2 border-[#999] bg-white pt-0.5">
        <div className="grid grid-cols-5">
          {tabs.map(({ name, Icon }) => (
            <button
              key={name}
              type="button"
              onClick={() => setTab(name)}
              className={clsx(
                'flex flex-col items-center gap-0.5 text-[45px] leading-[58px]',
                tab === name ? 'text-[#50b6b8]' : 'text-black'
              )}
            >
              <Icon />
              {name}
            </button>
          ))}
        </div>
        <div className="mx-auto mt-[69px] mb-6 h-[15px] w-[444px] rounded-full bg-black" />
      </nav>
    </div>
  );
}
